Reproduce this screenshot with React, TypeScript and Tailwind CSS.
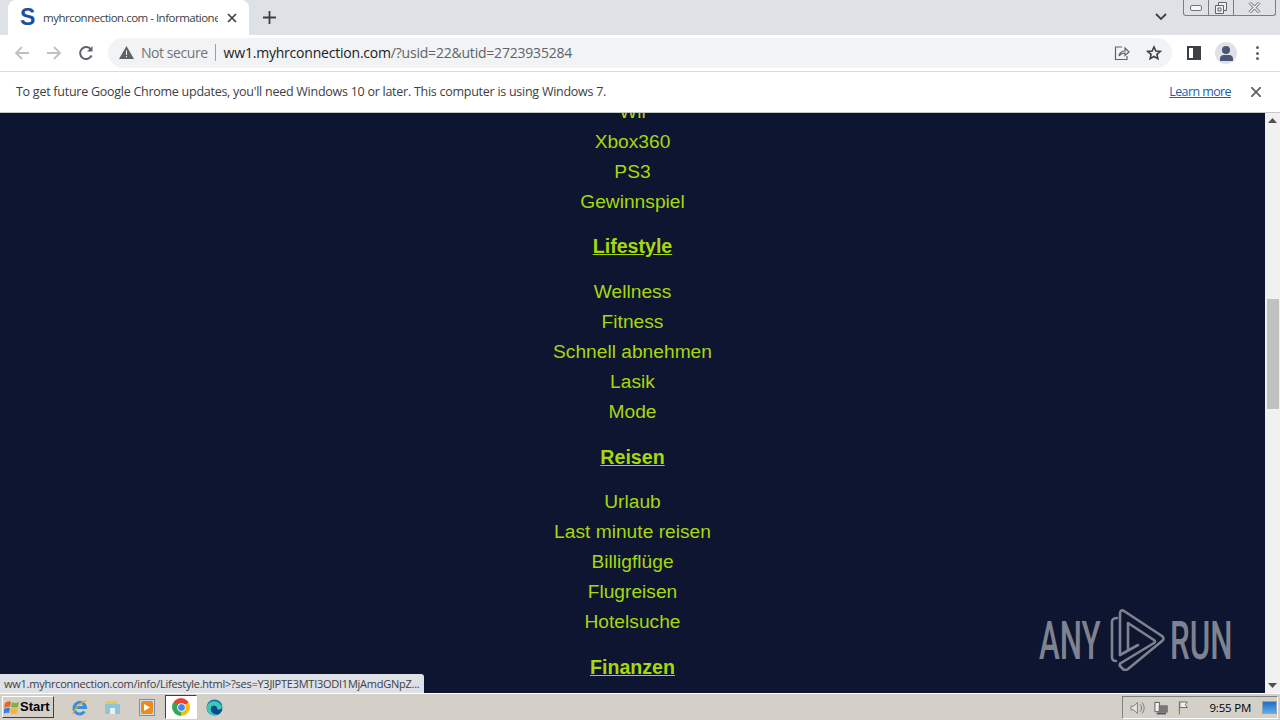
import React from "react";

const Item = ({ t }: { t: string }) => <div className="h-[30px] leading-[30px] text-center">{t}</div>;
const Head = ({ t, cls }: { t: string; cls: string }) => (
  <div className={`h-[30px] leading-[30px] text-center font-bold underline text-[19.6px] ${cls}`}>{t}</div>
);

const Back = ({ c }: { c: string }) => (
  <svg width="16" height="16" viewBox="0 0 16 16" fill="none" stroke={c} strokeWidth="1.8"><path d="M15 8H2M8 2 2 8l6 6" /></svg>
);
const Fwd = ({ c }: { c: string }) => (
  <svg width="16" height="16" viewBox="0 0 16 16" fill="none" stroke={c} strokeWidth="1.8"><path d="M1 8h13M8 2l6 6-6 6" /></svg>
);

export default function App() {
  return (
    <div className="w-[1280px] h-[720px] overflow-hidden flex flex-col font-['Liberation_Sans',sans-serif] relative bg-white">
      {/* tab strip */}
      <div className="h-[35px] bg-[#dee1e6] flex items-end shrink-0 pl-[8px] relative">
        <div className="w-[241px] h-[35px] bg-white rounded-t-lg flex items-center pl-[12px] font-['Open_Sans',sans-serif] text-[11.5px] text-[#3c4043]">
          <span className="w-[16px] text-[23px] leading-none font-bold text-[#1c4f9c] font-['Liberation_Sans',sans-serif] mr-[7px]">S</span>
          <span className="w-[175px] overflow-hidden whitespace-nowrap tracking-[-0.5px]">myhrconnection.com - Informationen</span>
          <svg className="ml-[9px]" width="10" height="10" viewBox="0 0 10 10" stroke="#3c4043" strokeWidth="1.7"><path d="M1 1l8 8M9 1 1 9" /></svg>
        </div>
        <svg className="ml-[14px] mb-[11px]" width="13" height="13" viewBox="0 0 13 13" stroke="#3c4043" strokeWidth="1.8"><path d="M6.500 0v13M0 6.500h13" /></svg>
        <svg className="absolute left-[1155px] top-[13px]" width="12" height="8" viewBox="0 0 12 8" fill="none" stroke="#3c4043" strokeWidth="1.8"><path d="M1 1l5 5 5-5" /></svg>
        <div className="absolute left-[1183px] top-0 w-[93px] h-[16px] border border-t-0 border-[#7a7d82] rounded-b-[3px] flex">
          <div className="w-[25px] border-r border-[#7a7d82] flex items-center justify-center">
            <div className="w-[12px] h-[6px] border border-[#70757a] rounded-[2px] bg-[#f4f5f6]" />
          </div>
          <div className="w-[25px] border-r border-[#7a7d82] flex items-center justify-center">
            <svg width="12" height="12" viewBox="0 0 12 12" fill="#eceef0" stroke="#60646a"><path d="M3.500 .5h8v8h-8z" /><path d="M.5 3.500h8v8h-8z" /><path d="M3 6h3v3H3z" /></svg>
          </div>
          <div className="flex-1 flex items-center justify-center">
            <svg width="13" height="11" viewBox="0 0 13 11" fill="none"><path d="M1.500 .5l10 10M11.500 .5l-10 10" stroke="#70757a" strokeWidth="3" /><path d="M1.500 .5l10 10M11.500 .5l-10 10" stroke="#f4f5f6" strokeWidth="1.2" /></svg>
          </div>
        </div>
      </div>

      {/* toolbar */}
      <div className="h-[37px] bg-white flex items-center shrink-0 border-b border-[#dadce0] relative">
        <div className="ml-[14px]"><Back c="#bdc1c6" /></div>
        <div className="ml-[16px]"><Fwd c="#bdc1c6" /></div>
        <svg className="ml-[16px]" width="16" height="16" viewBox="0 0 16 16" fill="none" stroke="#5f6368" strokeWidth="2"><path d="M13.600 10.500A6 6 0 1 1 13 4.500" /><path d="M14.500 1v5.500H9z" fill="#5f6368" stroke="none" /></svg>
        <div className="ml-[14px] w-[1064px] h-[30px] rounded-full bg-[#f1f3f4] flex items-center pl-[11px] pb-[1px] text-[14px] font-['Open_Sans',sans-serif] whitespace-nowrap">
          <svg width="15" height="13" viewBox="0 0 15 13"><path d="M7.500 0 15 13H0z" fill="#5f6368" /><path d="M7 4.500h1V9H7zM7 10h1v1.200H7z" fill="#fff" /></svg>
          <span className="ml-[7px] text-[#70757a] tracking-[-0.44px]">Not secure</span>
          <div className="ml-[7px] w-px h-[17px] bg-[#9aa0a6]" />
          <span className="ml-[8px] tracking-[-0.21px] text-[#202124]">ww1.myhrconnection.com<span className="text-[#5f6368]">/?usid=22&amp;utid=2723935284</span></span>
          <div className="flex-1" />
          <svg width="16" height="16" viewBox="0 0 16 16" fill="none" stroke="#5f6368" strokeWidth="1.2"><path d="M8 2H1.500v12.500H13V11" /><path d="M5 11c.5-3 3-5 6-5V3l4 4-4 3.500V8c-2.500 0-4.500 1-6 3z" /></svg>
          <svg className="ml-[16px] mr-[10px]" width="16" height="16" viewBox="0 0 24 24" fill="none" stroke="#3c4043" strokeWidth="2.4"><path d="M12 3l2.800 6 6.500.7-4.900 4.400 1.400 6.400L12 17.200 6.200 20.500l1.400-6.400L2.700 9.700 9.200 9z" /></svg>
        </div>
        <div className="ml-[15px] w-[14px] h-[14px] border-[2px] border-[#3c4043] flex justify-end"><div className="w-[6px] bg-[#3c4043]" /></div>
        <div className="ml-[14px] w-[22px] h-[22px] rounded-full bg-[#dfe1e5] overflow-hidden flex flex-col items-center justify-end">
          <div className="w-[8px] h-[8px] rounded-full bg-[#4a5578]" />
          <div className="w-[13px] h-[6px] mt-[1px] mb-[3px] rounded-t-[4px] bg-[#4a5578]" />
        </div>
        <div className="ml-[19px] flex flex-col gap-[2.500px]">
          <div className="w-[3px] h-[3px] rounded-full bg-[#5f6368]" />
          <div className="w-[3px] h-[3px] rounded-full bg-[#5f6368]" />
          <div className="w-[3px] h-[3px] rounded-full bg-[#5f6368]" />
        </div>
      </div>

      {/* info bar */}
      <div className="h-[41px] bg-white flex items-center shrink-0 border-b border-[#c8c8c8] font-['Open_Sans',sans-serif] text-[12.5px] text-[#3c4043] pl-[16px] whitespace-nowrap">
        <span className="tracking-[-0.26px]">To get future Google Chrome updates, you'll need Windows 10 or later. This computer is using Windows 7.</span>
        <div className="flex-1" />
        <span className="text-[#1a5fb4] underline tracking-[-0.6px]">Learn more</span>
        <svg className="ml-[20px] mr-[19px]" width="10" height="10" viewBox="0 0 10 10" stroke="#5f6368" strokeWidth="1.8"><path d="M0 0l10 10M10 0 0 10" /></svg>
      </div>

      {/* page */}
      <div className="flex-1 flex min-h-0">
        <div className="flex-1 bg-[#0e1530] text-[#a6d80c] text-[19.2px] overflow-hidden">
          <div className="-mt-[16px]">
            <Item t="Wii" />
            <Item t="Xbox360" />
            <Item t="PS3" />
            <Item t="Gewinnspiel" />
            <Head t="Lifestyle" cls="mt-[14px] mb-[16px]" />
            <Item t="Wellness" />
            <Item t="Fitness" />
            <Item t="Schnell abnehmen" />
            <Item t="Lasik" />
            <Item t="Mode" />
            <Head t="Reisen" cls="my-[15px]" />
            <Item t="Urlaub" />
            <Item t="Last minute reisen" />
            <Item t="Billigflüge" />
            <Item t="Flugreisen" />
            <Item t="Hotelsuche" />
            <Head t="Finanzen" cls="my-[15px]" />
          </div>
        </div>
        <div className="w-[15px] bg-[#f1f1f1] flex flex-col items-center shrink-0">
          <div className="h-[15px] flex items-center justify-center">
            <svg width="9" height="5" viewBox="0 0 9 5"><path d="M4.500 0 9 5H0z" fill="#505050" /></svg>
          </div>
          <div className="mt-[171px] w-[12px] h-[110px] bg-[#c1c1c1]" />
          <div className="flex-1" />
          <div className="h-[15px] flex items-center justify-center">
            <svg width="9" height="5" viewBox="0 0 9 5"><path d="M4.500 5 9 0H0z" fill="#505050" /></svg>
          </div>
        </div>
      </div>

      {/* status bubble */}
      <div className="absolute left-0 top-[674px] w-[424px] h-[19px] bg-[#dee1e6] rounded-tr-[3px] px-[4px] font-['Open_Sans',sans-serif] text-[11px] leading-[19px] text-[#3c4043] whitespace-nowrap overflow-hidden tracking-[-0.25px]">
        ww1.myhrconnection.com/info/Lifestyle.html&gt;?ses=Y3JlPTE3MTI3ODI1MjAmdGNpZ...
      </div>

      {/* watermark */}
      <div className="absolute left-[1039px] top-[609px] w-[192px] h-[62px] text-[#7f828f] font-['Roboto',sans-serif] font-medium text-[54px] leading-[62px]">
        <span className="absolute left-0 top-[1px] origin-left scale-x-[0.58] whitespace-nowrap">ANY</span>
        <svg className="absolute left-[69px] top-0" width="60" height="62" viewBox="0 0 60 62" fill="none" stroke="#7f828f" strokeWidth="2.600" strokeLinejoin="round" strokeLinecap="round">
          <path d="M9 9 Q4 9 4 13 V48 Q4 52 8 52" />
          <path d="M12 46 V5 Q12 0 16 2 L54 27 Q57 30 54 32 L20 60 Q17 62 15 60 L12 57 Q11 55 13 54 L46 34 Q48 32.500 46 31 L20 14 V40" />
          <path d="M12 46 L30 36" />
        </svg>
        <span className="absolute left-[131px] top-[1px] origin-left scale-x-[0.58] whitespace-nowrap">RUN</span>
      </div>

      {/* taskbar */}
      <div className="h-[27px] bg-[#d4d0c8] border-t border-white shrink-0 flex items-center relative font-['Liberation_Sans',sans-serif]">
        <div className="ml-[2px] w-[52px] h-[22px] bg-[#d4d0c8] border border-t-white border-l-white border-r-[#404040] border-b-[#404040] flex items-center pl-[1px] gap-[0px] text-[13px] font-bold text-black">
          <svg width="16" height="15" viewBox="0 0 16 15"><path d="M1 3Q4 0 7 2L6 7Q3 6 0 8z" fill="#e8622a" /><path d="M8 2Q11 4 15 2L14 7Q10 8 7 7z" fill="#7cb342" /><path d="M0 9Q3 7 6 8L5 13Q2 12 -1 14z" fill="#3a80d2" /><path d="M7 8Q10 9 14 8L13 13Q9 15 6 13z" fill="#f2b632" /></svg>
          Start
        </div>
        <svg className="ml-[17px]" width="17" height="17" viewBox="0 0 17 17" fill="none"><path d="M13.500 12.500A5.800 5.800 0 1 1 14.500 8.500H4" stroke="#3a8fd6" strokeWidth="3" /><path d="M2 15.500C1 12 11 2 15.500 1.500" stroke="#e3b23c" strokeWidth="1.300" /></svg>
        <svg className="ml-[16px]" width="17" height="16" viewBox="0 0 17 16"><path d="M1 5h15v10H1z" fill="#8fc4d8" /><path d="M3 2h9l2 3H1z" fill="#e9c65a" /><path d="M6 9h5v6H6z" fill="#e6f1f5" /></svg>
        <div className="ml-[18px] w-[16px] h-[17px] border border-[#6f93b8] bg-[#cfdcea] flex items-center justify-center">
          <div className="w-[12px] h-[13px] rounded-[2px] bg-[#ef8a17] flex items-center justify-center">
            <svg width="6" height="7" viewBox="0 0 6 7"><path d="M0 0l6 3.500L0 7z" fill="#fff" /></svg>
          </div>
        </div>
        <div className="ml-[10px] w-[32px] h-[24px] bg-white border border-t-[#404040] border-l-[#404040] border-r-white border-b-white flex items-center justify-center">
          <div className="w-[18px] h-[18px] rounded-full flex items-center justify-center bg-[conic-gradient(from_-60deg,#ea4335_0_33%,#fbbc05_33%_66%,#34a853_66%_100%)]">
            <div className="w-[9px] h-[9px] rounded-full bg-[#4285f4] border border-white" />
          </div>
        </div>
        <svg className="ml-[9px]" width="17" height="17" viewBox="0 0 17 17">
          <circle cx="8.500" cy="8.500" r="8" fill="#0f6cbd" />
          <path d="M1 7C3 1 13 0 16 8c0 2-3 3-5 2 1-3-5-5-6-1-1 3 2 7 7 6.500-5 3-12-1-11-8.500z" fill="#3fc8b0" />
          <path d="M5 9c-1 3 2 6.500 7 6.500 2-1 4-3 4.500-6-1 2-4 2-5.500.5 1-3-5-5-6-1z" fill="#0b4a8f" />
        </svg>
        <div className="absolute left-[1122px] top-[2px] w-[156px] h-[23px] border border-t-[#808080] border-l-[#808080] border-r-white border-b-white flex items-center text-[11.5px] text-black font-['Open_Sans',sans-serif] whitespace-nowrap">
          <svg className="ml-[7px]" width="16" height="14" viewBox="0 0 16 14" fill="none" stroke="#777"><path d="M1 5h3l4-4v12L4 9H1z" fill="#e4e4e4" /><path d="M11 3c2 2 2 6 0 8M13 1c3 3 3 9 0 12" /></svg>
          <svg className="ml-[9px]" width="16" height="16" viewBox="0 0 16 16"><path d="M1 2h5v10H1z" fill="#f2f2f2" stroke="#555" /><path d="M5 5h10v8H5z" fill="#777" /><path d="M3 13h10v2H3z" fill="#555" /></svg>
          <svg className="ml-[9px]" width="15" height="15" viewBox="0 0 15 15" fill="none" stroke="#666"><path d="M1.500 1v14" /><path d="M2 1.500h8l-2 3 2 3H2z" fill="#efefef" /></svg>
          <span className="ml-[18px] tracking-[-0.2px]">9:55 PM</span>
          <div className="ml-[11px] w-[16px] h-[13px] bg-[linear-gradient(#1f6fc0,#62a8e8)] border border-[#8aa5bf]" />
        </div>
      </div>
    </div>
  );
}
